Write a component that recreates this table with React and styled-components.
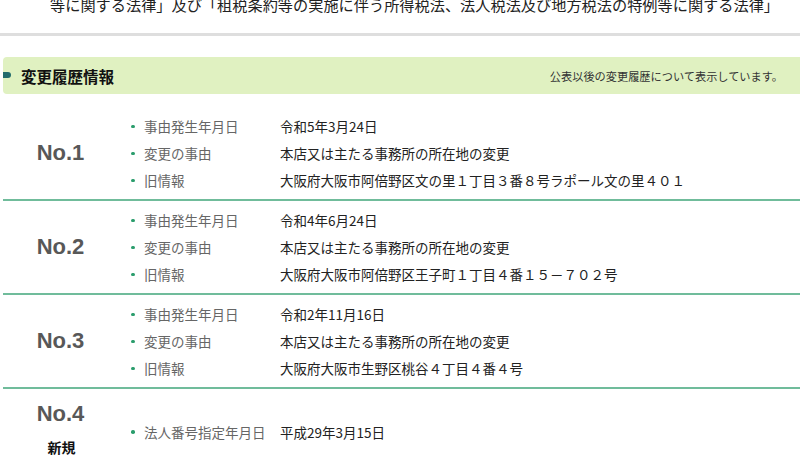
import React from "react";
import styled, { createGlobalStyle } from "styled-components";

const GlobalStyle = createGlobalStyle`
  html, body {
    margin: 0;
    padding: 0;
    background: #ffffff;
    overflow: hidden;
  }
  body {
    font-family: "Noto Sans CJK JP", "Noto Sans", sans-serif;
    color: #222222;
  }
`;

const Page = styled.div`
  width: 800px;
  overflow: hidden;
`;

const LawText = styled.p`
  margin: -8px 0 0;
  padding-left: 50px;
  font-size: 15.2px;
  line-height: 24px;
  height: 17px;
  white-space: nowrap;
  color: #222222;
`;

const Rule = styled.hr`
  margin: 0;
  margin-top: 24px;
  border: none;
  height: 3px;
  background: #dedede;
`;

const Section = styled.section`
  padding-left: 3px;
  margin-top: 21px;
`;

const Heading = styled.div`
  display: flex;
  align-items: center;
  justify-content: space-between;
  height: 37px;
  margin-right: -10px;
  padding: 0 27px 0 18px;
  background: #e0f1c1;
  border-radius: 4px;
  position: relative;
  margin-bottom: 13px;

  &::before {
    content: "";
    position: absolute;
    left: 0;
    top: 15px;
    width: 8px;
    height: 6px;
    border-radius: 0 3px 3px 0;
    background: #236c6c;
  }
`;

const HeadingTitle = styled.h2`
  margin: 0;
  font-size: 15.5px;
  font-weight: 700;
  color: #111111;
`;

const HeadingNote = styled.span`
  font-size: 11.2px;
  color: #333333;
`;

const Row = styled.div`
  display: grid;
  grid-template-columns: 115px 1fr;
  align-items: center;
  padding: ${(p) => (p.$last ? "2px 0 6px" : "5.5px 0")};
  border-bottom: ${(p) => (p.$last ? "none" : "2px solid #70bc9b")};
  min-height: 81px;
`;

const NumberCol = styled.div`
  display: flex;
  flex-direction: column;
  align-items: center;
  gap: 10px;
  margin-bottom: ${(p) => (p.$stacked ? "6px" : "0")};
`;

const Num = styled.div`
  font-family: "Liberation Sans", Arial, sans-serif;
  font-weight: 700;
  font-size: 22px;
  line-height: 26px;
  color: #585858;
`;

const Badge = styled.div`
  font-size: 14px;
  font-weight: 700;
  line-height: 20px;
  color: #111111;
  padding-left: 2px;
`;

const Items = styled.ul`
  margin: 0;
  padding: 0;
  list-style: none;
`;

const Item = styled.li`
  display: flex;
  align-items: center;
  height: 27px;
  font-size: 13.5px;
`;

const Label = styled.span`
  position: relative;
  width: 136px;
  padding-left: 26px;
  color: #666666;
  flex-shrink: 0;
  white-space: nowrap;

  &::before {
    content: "";
    position: absolute;
    left: 13px;
    top: 50%;
    width: 3.5px;
    height: 3.5px;
    margin-top: -1.5px;
    border-radius: 50%;
    background: #2a9d6c;
  }
`;

const Value = styled.span`
  color: #222222;
  white-space: nowrap;
`;

const history = [
  {
    no: "No.1",
    items: [
      ["事由発生年月日", "令和5年3月24日"],
      ["変更の事由", "本店又は主たる事務所の所在地の変更"],
      ["旧情報", "大阪府大阪市阿倍野区文の里１丁目３番８号ラポール文の里４０１"],
    ],
  },
  {
    no: "No.2",
    items: [
      ["事由発生年月日", "令和4年6月24日"],
      ["変更の事由", "本店又は主たる事務所の所在地の変更"],
      ["旧情報", "大阪府大阪市阿倍野区王子町１丁目４番１５－７０２号"],
    ],
  },
  {
    no: "No.3",
    items: [
      ["事由発生年月日", "令和2年11月16日"],
      ["変更の事由", "本店又は主たる事務所の所在地の変更"],
      ["旧情報", "大阪府大阪市生野区桃谷４丁目４番４号"],
    ],
  },
  {
    no: "No.4",
    badge: "新規",
    items: [["法人番号指定年月日", "平成29年3月15日"]],
  },
];

const App = () => {
  return (
    <Page>
      <GlobalStyle />
      <LawText>
        等に関する法律」及び「租税条約等の実施に伴う所得税法、法人税法及び地方税法の特例等に関する法律」
      </LawText>
      <Rule />
      <Section>
        <Heading>
          <HeadingTitle>変更履歴情報</HeadingTitle>
          <HeadingNote>公表以後の変更履歴について表示しています。</HeadingNote>
        </Heading>
        {history.map((entry, index) => (
          <Row key={entry.no} $last={index === history.length - 1}>
            <NumberCol $stacked={Boolean(entry.badge)}>
              <Num>{entry.no}</Num>
              {entry.badge && <Badge>{entry.badge}</Badge>}
            </NumberCol>
            <Items>
              {entry.items.map(([label, value]) => (
                <Item key={label}>
                  <Label>{label}</Label>
                  <Value>{value}</Value>
                </Item>
              ))}
            </Items>
          </Row>
        ))}
      </Section>
    </Page>
  );
};

export default App;
